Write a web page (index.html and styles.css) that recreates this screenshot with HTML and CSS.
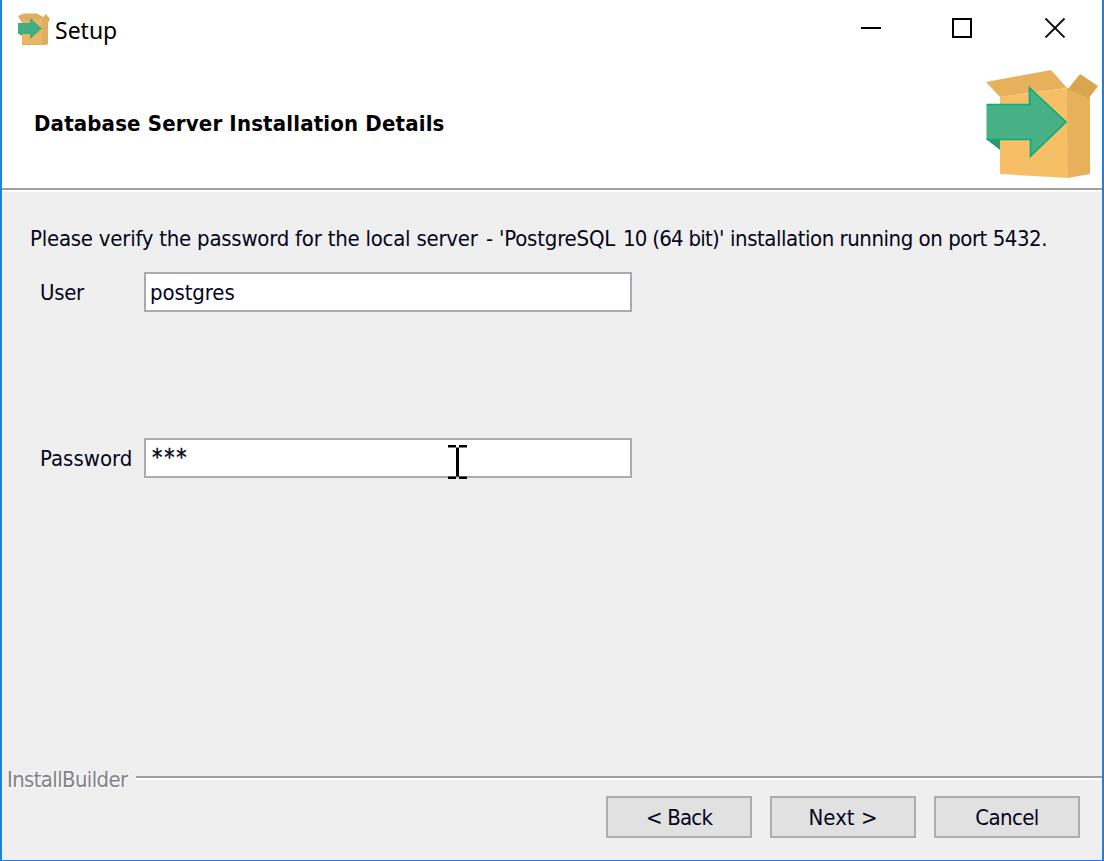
FILE: index.html
```html
<!DOCTYPE html>
<html lang="en">
<head>
<meta charset="utf-8">
<title>Setup</title>
<link rel="stylesheet" href="styles.css">
</head>
<body>
<main class="window">
  <header class="titlebar">
    <svg class="app-icon" viewBox="0 0 32 32">
      <path fill="#dfae65" d="M4 10 0 3 6 .500H19L25 4l3-3 4 5-2 4v21l-2 1H4z"/>
      <path fill="#e9b664" d="M4 8 24 6v25H4z"/>
      <path fill="#2d966e" d="M0 20h4v3z"/>
      <path fill="#42ac82" d="M0 10h12V5l12 10.500L12 26v-5H0z"/>
    </svg>
    <span class="title">Setup</span>
    <svg class="controls" viewBox="0 0 206 24">
      <path d="M1 14H21M93 5h18v18h-18z" fill="none" stroke="#000" stroke-width="2"/>
      <path d="M185.500 4.500l19 19M204.500 4.500l-19 19" fill="none" stroke="#111" stroke-width="1.900"/>
    </svg>
  </header>
  <section class="banner">
    <h1 class="heading">Database Server Installation Details</h1>
    <svg class="logo" viewBox="0 0 112 109">
      <path fill="#f6be65" d="M14 27 82 18v90l-68-4z"/>
      <path fill="#e7b05a" d="M81 18 104 27v77l-22 4z"/>
      <path fill="#e7b05a" d="M0 12 65 0 81 18 14 27z"/>
      <path fill="#d9a54f" d="M82 19 94 4l18 12-9 12z"/>
      <path fill="#2d966e" d="M0 69h14v11z"/>
      <path fill="#47b085" d="M.5 34.500H43.500V18L80 52 44.500 87V69.500H.5z"/>
      <path fill="none" stroke="#08ad83" stroke-width="1.700" d="M.5 34.500H43.500V18L80 52 44.500 86V69.500H.5"/>
    </svg>
  </section>
  <section class="content">
    <p class="message"><span class="m1">Please verify the password for the local server</span><span class="m2">- 'PostgreSQL</span><span class="m3">10 (64 bit)'</span><span class="m4">installation running on port 5432.</span></p>
    <div class="row">
      <span class="label label-user">User</span>
      <div class="field"><span class="user-value">postgres</span></div>
    </div>
    <div class="row row-password">
      <span class="label label-password">Password</span>
      <div class="field"><span class="mask">***</span>
        <svg class="cursor" viewBox="0 0 19 34"><path d="M0 0h8v2.500H0zM11 0h8v2.500h-8zM8 2.500h3v29H8zM0 31.500h8V34H0zM11 31.500h8V34h-8z"/></svg>
      </div>
    </div>
  </section>
  <footer class="footer">
    <div class="brand-row"><span class="brand">InstallBuilder</span><span class="rule"></span></div>
    <div class="buttons">
      <button class="btn back">&lt; Back</button>
      <button class="btn next">Next &gt;</button>
      <button class="btn cancel">Cancel</button>
    </div>
  </footer>
</main>
</body>
</html>
```
FILE: styles.css
```css
* { box-sizing: border-box; }
body { margin: 0; background: #fff; font: 22px/26px "DejaVu Sans Condensed", "DejaVu Sans", sans-serif; font-stretch: condensed; color: #05051a; }
.window { width: 1104px; height: 861px; display: flex; flex-direction: column; background: #efefef; border: 2px solid #1b83d9; border-top: 0; border-bottom-width: 1px; overflow: hidden; white-space: nowrap; }
.titlebar { height: 60px; display: flex; align-items: flex-start; background: #fff; padding: 13px 36px 0 16px; }
.app-icon { width: 32px; height: 32px; flex: none; filter: blur(.5px); }
.title { font: 23px/30px "Noto Sans", sans-serif; letter-spacing: 0; margin: 2px 0 0 5px; color: #000; }
.controls { width: 206px; height: 24px; margin: 1px 0 0 auto; }
.banner { height: 128px; display: flex; justify-content: space-between; background: #fff; padding: 10px 4px 0 32px; }
.heading { margin: 41px 0 0; font-size: 22px; line-height: 26px; font-weight: bold; letter-spacing: .17px; color: #000; }
.logo { width: 112px; height: 109px; }
.content { flex: 1; border-top: 2px solid #a0a0a0; box-shadow: inset 0 2px #fff; padding-top: 36px; }
.message { margin: 0 0 0 28px; height: 26px; display: flex; }
.m1 { width: 456px; letter-spacing: -.24px; }
.m2 { width: 137px; letter-spacing: -.2px; }
.m3 { width: 107px; letter-spacing: -.75px; }
.m4 { letter-spacing: -.46px; }
.row { display: flex; align-items: center; padding-left: 38px; margin-top: 20px; height: 40px; }
.row-password { margin-top: 126px; }
.label { width: 104px; padding-top: 2px; letter-spacing: -.3px; }
.label-password { letter-spacing: 0; }
.field { position: relative; display: flex; align-items: center; width: 488px; height: 40px; background: #fff; border: 2px solid #abaab1; padding: 2px 0 0 4px; }
.user-value { letter-spacing: -.1px; }
.mask { font-size: 23px; letter-spacing: 1.8px; padding: 0 0 4px 2px; -webkit-text-stroke: .4px; }
.cursor { position: absolute; left: 302px; top: 5px; width: 19px; height: 34px; }
.footer { height: 93px; }
.brand-row { display: flex; padding-left: 5px; height: 29px; }
.brand { width: 129px; color: #838389; text-shadow: 1px 1px #fff; letter-spacing: -.65px; }
.rule { flex: 1; height: 4px; margin-top: 9px; border-top: 2px solid #a0a0a0; border-bottom: 2px solid #fff; }
.buttons { display: flex; justify-content: flex-end; gap: 18px; padding-right: 22px; }
.btn { width: 146px; height: 42px; padding: 2px 0 0; border: 2px solid #adadad; background: #e1e1e1; font: inherit; color: inherit; letter-spacing: -.6px; }
.back { letter-spacing: -.8px; }
.next { letter-spacing: 0; }
```
